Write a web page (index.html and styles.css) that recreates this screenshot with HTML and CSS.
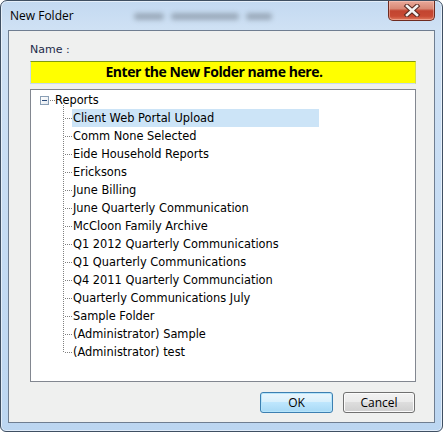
FILE: index.html
```html
<!DOCTYPE html>
<html>
<head>
<meta charset="utf-8">
<link rel="stylesheet" href="styles.css">
</head>
<body>
<div class="window">
  <div class="titlebar">
    <span class="title">New Folder</span>
    <span class="ghost"><i class="g1"></i><i class="g2"></i><i class="g3"></i></span>
    <button class="close" aria-label="Close">
      <svg width="20" height="13" viewBox="0 0 20 13">
        <path d="M5 2 L15 11 M15 2 L5 11" stroke="#5a2a22" stroke-width="4.6" stroke-linecap="square" fill="none"/>
        <path d="M5 2 L15 11 M15 2 L5 11" stroke="#f4f4f4" stroke-width="2.6" stroke-linecap="square" fill="none"/>
      </svg>
    </button>
  </div>
  <div class="client">
    <div class="label">Name :</div>
    <div class="namebox">Enter the New Folder name here.</div>
    <div class="tree">
      <div class="root">
        <span class="toggle"><span class="minus"></span></span><span class="rdots"></span><span class="rlabel">Reports</span>
      </div>
      <ul class="children">
        <li><span class="node selected">Client Web Portal Upload</span></li>
        <li><span class="node">Comm None Selected</span></li>
        <li><span class="node">Eide Household Reports</span></li>
        <li><span class="node">Ericksons</span></li>
        <li><span class="node">June Billing</span></li>
        <li><span class="node">June Quarterly Communication</span></li>
        <li><span class="node">McCloon Family Archive</span></li>
        <li><span class="node">Q1 2012 Quarterly Communications</span></li>
        <li><span class="node">Q1 Quarterly Communications</span></li>
        <li><span class="node">Q4 2011 Quarterly Communciation</span></li>
        <li><span class="node">Quarterly Communications July</span></li>
        <li><span class="node">Sample Folder</span></li>
        <li><span class="node">(Administrator) Sample</span></li>
        <li><span class="node">(Administrator) test</span></li>
      </ul>
    </div>
    <div class="buttons">
      <button class="btn ok">OK</button>
      <button class="btn cancel">Cancel</button>
    </div>
  </div>
</div>
</body>
</html>
```
FILE: styles.css
```css
html, body {
  margin: 0;
  padding: 0;
  background: #ffffff;
}
.window {
  box-sizing: border-box;
  width: 443px;
  height: 432px;
  border: 1px solid #3f4f62;
  border-radius: 7px 7px 6px 6px;
  background: linear-gradient(180deg, #c3d9f1 0px, #cfe1f4 28px, #c4dbf3 60%, #bcd6f1 100%);
  padding: 0 7px 8px 7px;
  display: flex;
  flex-direction: column;
  box-shadow: inset 0 0 0 1px rgba(255,255,255,0.55);
}
.titlebar {
  height: 29px;
  display: flex;
  align-items: flex-start;
  position: relative;
}
.title {
  font-family: "Open Sans", "Noto Sans", sans-serif;
  font-size: 12px;
  color: #000;
  margin: 7px 0 0 2px;
  line-height: 16px;
}
.ghost {
  display: flex;
  gap: 7px;
  margin: 12px 0 0 60px;
  filter: blur(2.5px);
  opacity: 0.5;
}
.ghost i {
  display: block;
  height: 7px;
  background: #6d7884;
  border-radius: 3px;
}
.g1 { width: 30px; }
.g2 { width: 68px; }
.g3 { width: 26px; }
.close {
  margin-left: auto;
  margin-right: 0;
  width: 47px;
  height: 20px;
  border: 1px solid #6e2b20;
  border-top: none;
  border-radius: 0 0 5px 5px;
  background: linear-gradient(180deg, #e9a99a 0%, #d98875 40%, #c24430 52%, #c84a34 80%, #e07a5e 100%);
  padding: 0;
  display: flex;
  align-items: center;
  justify-content: center;
  box-shadow: inset 0 0 0 1px rgba(255,210,200,0.45);
  margin-top: 0;
}
.close svg { display: block; }
.client {
  flex: 1;
  background: #eff0ef;
  border: 1px solid #6f7e91;
  padding: 11px 18px 0 21px;
  display: flex;
  flex-direction: column;
}
.label {
  font-family: "DejaVu Sans", Verdana, sans-serif;
  font-size: 11px;
  color: #1d2a4a;
  line-height: 14px;
  height: 14px;
  margin-bottom: 4px;
  padding-top: 1px;
}
.namebox {
  box-sizing: border-box;
  height: 23px;
  background: #ffff00;
  border: 1px solid;
  border-color: #7f9a10 #d6dc50 #c7dbef #c7dbef;
  font-family: "Open Sans", "Noto Sans", sans-serif;
  font-weight: 700;
  font-size: 14px;
  line-height: 20px;
  text-align: center;
  color: #000;
  letter-spacing: -0.45px;
  padding-right: 18px;
}
.tree {
  box-sizing: border-box;
  margin-top: 5px;
  height: 293px;
  background: #ffffff;
  border: 1px solid #828790;
  padding: 1px 0 0 9px;
  font-family: "DejaVu Sans", Verdana, sans-serif;
  font-size: 11.4px;
  color: #000;
}
.root {
  height: 18px;
  display: flex;
  align-items: center;
}
.toggle {
  box-sizing: border-box;
  width: 9px;
  height: 9px;
  border: 1px solid #8a9fb5;
  background: linear-gradient(135deg, #ffffff 0%, #e4e9ef 100%);
  display: flex;
  align-items: center;
  justify-content: center;
}
.minus {
  width: 5px;
  height: 1px;
  background: #2a4a7a;
}
.rdots {
  width: 5px;
  height: 1px;
  background: repeating-linear-gradient(90deg, #808080 0 1px, transparent 1px 2px);
  margin-left: 1px;
}
.rlabel {
  margin-left: 0;
  line-height: 18px;
}
.children {
  list-style: none;
  margin: 0;
  padding: 0 0 0 23px;
}
.children li {
  height: 18px;
  display: flex;
  align-items: center;
  position: relative;
  padding-left: 9px;
}
.children li::before {
  content: "";
  position: absolute;
  left: 0;
  top: 0;
  width: 1px;
  height: 18px;
  background: repeating-linear-gradient(180deg, #808080 0 1px, transparent 1px 2px);
}
.children li:first-child::before {
  top: -4px;
  height: 22px;
}
.children li:last-child::before {
  height: 10px;
}
.children li::after {
  content: "";
  position: absolute;
  left: 1px;
  top: 9px;
  width: 8px;
  height: 1px;
  background: repeating-linear-gradient(90deg, transparent 0 1px, #808080 1px 2px);
}
.node {
  line-height: 18px;
  padding-left: 1px;
  white-space: nowrap;
}
.node.selected {
  background: #cce4f7;
  width: 246px;
}
.buttons {
  display: flex;
  justify-content: flex-end;
  gap: 10px;
  margin-top: 10px;
  padding-right: 1px;
}
.btn {
  box-sizing: border-box;
  height: 21px;
  border-radius: 3px;
  font-family: "Open Sans", "Noto Sans", sans-serif;
  font-size: 12px;
  color: #000;
  padding: 0;
  line-height: 18px;
}
.ok {
  width: 73px;
  border: 1px solid #3c7fb1;
  background: linear-gradient(180deg, #eaf6fd 0%, #d9f0fc 45%, #bee6fd 50%, #a7d9f5 100%);
  box-shadow: inset 0 0 0 1px #b6e5fb;
}
.cancel {
  width: 72px;
  border: 1px solid #707070;
  background: linear-gradient(180deg, #f2f2f2 0%, #ebebeb 45%, #dddddd 50%, #cfcfcf 100%);
  box-shadow: inset 0 0 0 1px #fbfbfb;
}
```
